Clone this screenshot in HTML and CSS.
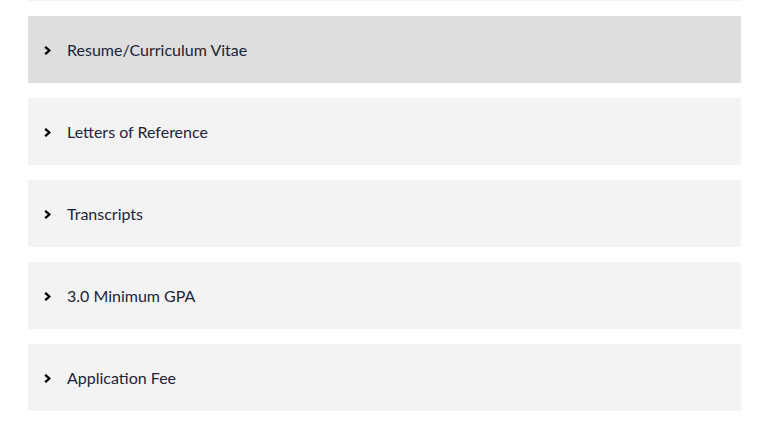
FILE: index.html
```html
<!DOCTYPE html>
<html>
<head>
<meta charset="utf-8">
<link rel="stylesheet" href="styles.css">
</head>
<body>
<div class="accordion">
  <div class="prev"></div>
  <div class="item active"><span class="chev"><svg width="7" height="9" viewBox="0 0 7 9"><path d="M1.2 0.8 L5.4 4.5 L1.2 8.2" fill="none" stroke="#000" stroke-width="2.3"/></svg></span><span class="label">Resume/Curriculum Vitae</span></div>
  <div class="item"><span class="chev"><svg width="7" height="9" viewBox="0 0 7 9"><path d="M1.2 0.8 L5.4 4.5 L1.2 8.2" fill="none" stroke="#000" stroke-width="2.3"/></svg></span><span class="label">Letters of Reference</span></div>
  <div class="item"><span class="chev"><svg width="7" height="9" viewBox="0 0 7 9"><path d="M1.2 0.8 L5.4 4.5 L1.2 8.2" fill="none" stroke="#000" stroke-width="2.3"/></svg></span><span class="label">Transcripts</span></div>
  <div class="item"><span class="chev"><svg width="7" height="9" viewBox="0 0 7 9"><path d="M1.2 0.8 L5.4 4.5 L1.2 8.2" fill="none" stroke="#000" stroke-width="2.3"/></svg></span><span class="label">3.0 Minimum GPA</span></div>
  <div class="item"><span class="chev"><svg width="7" height="9" viewBox="0 0 7 9"><path d="M1.2 0.8 L5.4 4.5 L1.2 8.2" fill="none" stroke="#000" stroke-width="2.3"/></svg></span><span class="label">Application Fee</span></div>
</div>
</body>
</html>
```
FILE: styles.css
```css
html, body { margin: 0; padding: 0; background: #fff; }
body { font-family: "Lato", "Liberation Sans", sans-serif; }
.accordion {
  width: 713px;
  margin-left: 28px;
  display: flex;
  flex-direction: column;
  gap: 15px;
}
.prev { height: 0; border-top: 1px solid #f3f3f3; margin-bottom: 0; }
.item {
  height: 67px;
  background: #f3f3f3;
  display: flex;
  align-items: center;
  padding-left: 16px;
  box-sizing: border-box;
}
.item.active { background: #dddedd; }
.chev { display: flex; width: 7px; height: 9px; margin-right: 16px; margin-top: 1px; }
.label { font-size: 16px; color: #1b2438; line-height: 20px; }
```
